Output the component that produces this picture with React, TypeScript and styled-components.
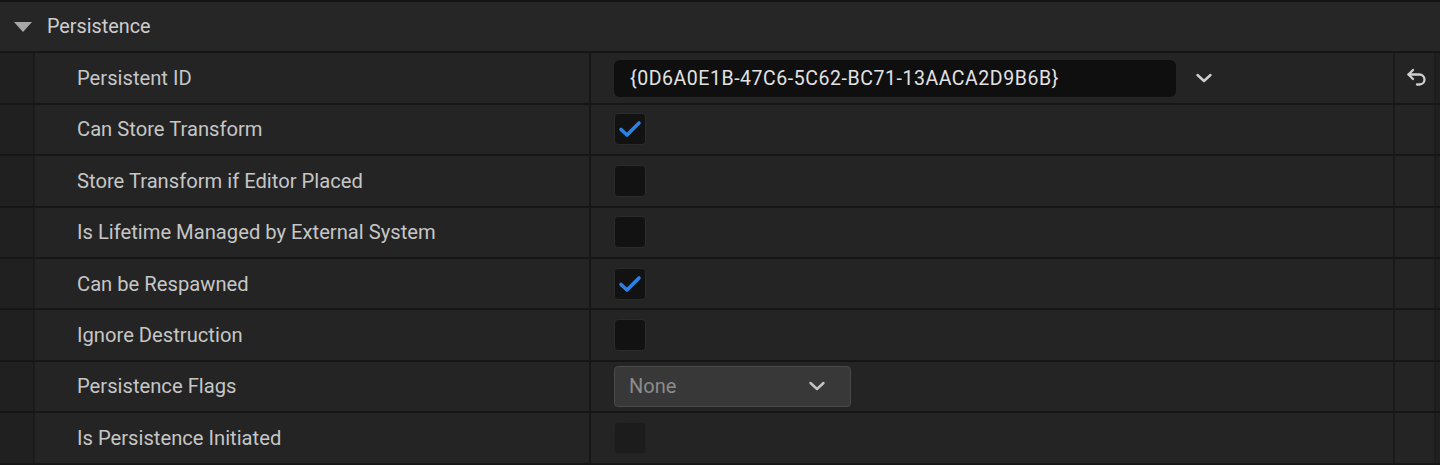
import React from 'react';
import styled, { createGlobalStyle } from 'styled-components';

const GlobalStyle = createGlobalStyle`
  html, body {
    margin: 0;
    padding: 0;
    background: #151515;
  }
  body {
    font-family: Roboto, "Noto Sans", "Liberation Sans", sans-serif;
  }
`;

const Panel = styled.div`
  width: 1440px;
  height: 465px;
  overflow: hidden;
  background: #151515;
  border-top: 2px solid #141414;
  box-sizing: border-box;
`;

const Row = styled.div`
  display: flex;
  height: 49.4px;
  border-bottom: 2px solid #161616;
  background: #242424;
`;

const Header = styled(Row)`
  align-items: center;
  background: #262626;
  color: #cdcdcd;
  font-size: 19.8px;
  padding-left: 14px;
  gap: 15px;
`;

const Indent = styled.div`
  flex: 0 0 33px;
  background: #202020;
  border-right: 2px solid #1a1a1a;
`;

const NameCell = styled.div`
  flex: 0 0 512px;
  display: flex;
  align-items: center;
  padding-left: 42px;
  color: #c6c6c6;
  font-size: 20.2px;
  border-right: 2px solid #171717;
`;

const ValueCell = styled.div`
  flex: 1;
  display: flex;
  align-items: center;
  gap: 10px;
  padding-left: 23px;
  border-right: 2px solid #1a1a1a;
`;

const ResetCell = styled.div`
  flex: 0 0 41px;
  display: flex;
  align-items: center;
  justify-content: center;
  padding-left: 5px;
  box-sizing: border-box;
  color: #c8c8c8;
  border-right: 2px solid #1c1c1c;
`;

const Edge = styled.div`
  flex: 0 0 4px;
  background: #202020;
`;

const TextInput = styled.div`
  width: 562px;
  height: 37px;
  box-sizing: border-box;
  display: flex;
  align-items: center;
  padding-left: 16px;
  background: #0f0f0f;
  border-radius: 6px;
  color: #e2e2e2;
  font-size: 19.5px;
  letter-spacing: 0.55px;
`;

const IconButton = styled.div`
  width: 36px;
  height: 36px;
  display: flex;
  align-items: center;
  justify-content: center;
  color: #cfcfcf;
`;

const Box = styled.div<{ $disabled?: boolean }>`
  width: 32px;
  height: 32px;
  box-sizing: border-box;
  display: flex;
  align-items: center;
  justify-content: center;
  border-radius: 4px;
  background: ${(p) => (p.$disabled ? '#1c1c1c' : '#121212')};
  border: 1px solid ${(p) => (p.$disabled ? '#222' : '#2b2b2b')};
`;

const Combo = styled.div`
  width: 237px;
  height: 41px;
  box-sizing: border-box;
  display: flex;
  align-items: center;
  justify-content: space-between;
  padding: 0 22px 0 14px;
  background: #383838;
  border: 1px solid #4a4a4a;
  border-radius: 4px;
  color: #8c8c8c;
  font-size: 20px;
`;

const Chevron = ({ color = '#cfcfcf' }: { color?: string }) => (
  <svg width="22" height="22" viewBox="0 0 22 22" fill="none">
    <polyline points="4.5 8 11 14 17.5 8" stroke={color} strokeWidth="2.4" strokeLinecap="round" strokeLinejoin="round" />
  </svg>
);

const Check = () => (
  <svg width="26" height="26" viewBox="0 0 26 26" fill="none">
    <polyline points="4 13.5 10 19 22 7" stroke="#2a82e6" strokeWidth="3.6" strokeLinecap="round" strokeLinejoin="round" />
  </svg>
);

const ResetArrow = () => (
  <svg width="24" height="24" viewBox="0 0 24 24" fill="none" stroke="#d0d0d0" strokeWidth="2.3" strokeLinecap="round" strokeLinejoin="round">
    <polyline points="8 4 3.5 8.5 8 13" />
    <path d="M3.5 8.5h11a5 5 0 0 1 0 10h-2.5" />
  </svg>
);

const Triangle = () => (
  <svg width="18" height="10" viewBox="0 0 18 10">
    <polygon points="0 0 18 0 9 10" fill="#a8a8a8" />
  </svg>
);

type Prop =
  | { name: string; kind: 'text'; value: string }
  | { name: string; kind: 'check'; checked: boolean; disabled?: boolean }
  | { name: string; kind: 'combo'; value: string };

const props: Prop[] = [
  { name: 'Persistent ID', kind: 'text', value: '{0D6A0E1B-47C6-5C62-BC71-13AACA2D9B6B}' },
  { name: 'Can Store Transform', kind: 'check', checked: true },
  { name: 'Store Transform if Editor Placed', kind: 'check', checked: false },
  { name: 'Is Lifetime Managed by External System', kind: 'check', checked: false },
  { name: 'Can be Respawned', kind: 'check', checked: true },
  { name: 'Ignore Destruction', kind: 'check', checked: false },
  { name: 'Persistence Flags', kind: 'combo', value: 'None' },
  { name: 'Is Persistence Initiated', kind: 'check', checked: false, disabled: true },
];

const Value = ({ p }: { p: Prop }) => {
  if (p.kind === 'text') {
    return (
      <>
        <TextInput>{p.value}</TextInput>
        <IconButton>
          <Chevron />
        </IconButton>
      </>
    );
  }
  if (p.kind === 'combo') {
    return (
      <Combo>
        {p.value}
        <Chevron color="#c4c4c4" />
      </Combo>
    );
  }
  return <Box $disabled={p.disabled}>{p.checked && <Check />}</Box>;
};

export default function App() {
  return (
    <>
      <GlobalStyle />
      <Panel>
        <Header>
          <Triangle />
          Persistence
        </Header>
        {props.map((p) => (
          <Row key={p.name}>
            <Indent />
            <NameCell>{p.name}</NameCell>
            <ValueCell>
              <Value p={p} />
            </ValueCell>
            <ResetCell>{p.kind === 'text' && <ResetArrow />}</ResetCell>
            <Edge />
          </Row>
        ))}
      </Panel>
    </>
  );
}
